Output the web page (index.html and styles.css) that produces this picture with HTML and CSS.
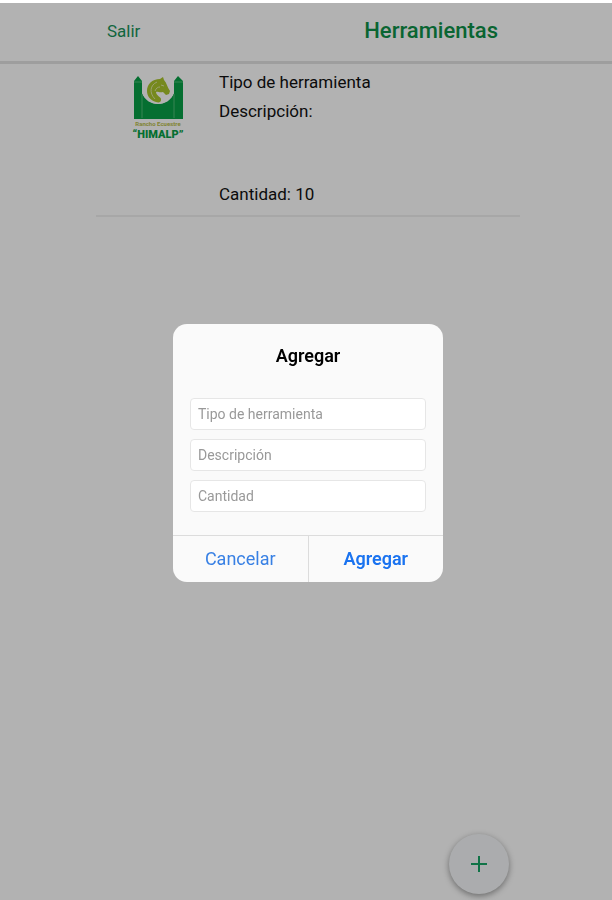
FILE: index.html
```html
<!DOCTYPE html>
<html lang="es">
<head>
    <meta charset="UTF-8">
    <meta name="viewport" content="width=device-width, initial-scale=1.0">
    <title>Herramientas</title>
    <link rel="stylesheet" href="styles.css">
</head>
<body>

    <div class="app">
        <header class="header">
            <div class="header-content">
                <a href="#" class="salir">Salir</a>
                <h1>Herramientas</h1>
            </div>
        </header>

        <main class="lista">
            <article class="herramienta">
                <svg class="logo" viewBox="0 0 52 66" role="img" aria-label="Rancho Ecuestre HIMALP">
                    <!-- torres y muro -->
                    <path class="verde" d="M6 0L10 5V17C13 24 19 28 26 28S39 24 42 17V5L46 0L51 5V43H2V5Z"/>
                    <path class="fondo" d="M10 0H42V17C39 24 33 28 26 28S13 24 10 17Z"/>
                    <path class="linea" d="M2 6H10M42 6H51M10 18V42M42 18V42"/>
                    <!-- caballo -->
                    <path class="lima" d="M28 3L31 1L32 4C35 7 35 11 38 15L37 18L34 19L31 16C27 17 26 15 24 16C24 20 30 21 29 24C29 26 27 27 24 26C18 24 15 20 15 15C15 8 20 3 28 3Z"/>
                    <path class="crin" d="M25 6C18 9 17 17 23 23M29 9L32 10M23 15C24 12 26 11 28 11"/>
                    <text class="rancho" x="26" y="50" text-anchor="middle">Rancho Ecuestre</text>
                    <text class="himalp" x="26" y="62" text-anchor="middle">“HIMALP”</text>
                </svg>
                <div class="datos">
                    <p>Tipo de herramienta</p>
                    <p>Descripción:</p>
                    <p class="cantidad">Cantidad: 10</p>
                </div>
            </article>
        </main>

        <div class="acciones">
            <button type="button" class="boton-agregar" aria-label="Agregar herramienta">
                <svg width="16" height="16" viewBox="0 0 16 16">
                    <path d="M8 0V16M0 8H16"/>
                </svg>
            </button>
        </div>
    </div>

    <div class="fondo-modal">
        <form class="modal" role="dialog" aria-labelledby="tituloModal">
            <h2 id="tituloModal">Agregar</h2>
            <div class="campos">
                <input type="text" id="tipo" placeholder="Tipo de herramienta" aria-label="Tipo de herramienta">
                <input type="text" id="descripcion" placeholder="Descripción" aria-label="Descripción">
                <input type="text" id="cantidad" placeholder="Cantidad" aria-label="Cantidad">
            </div>
            <div class="botones">
                <button type="button">Cancelar</button>
                <button type="button" class="principal">Agregar</button>
            </div>
        </form>
    </div>

</body>
</html>
```
FILE: styles.css
```css
* {
    box-sizing: border-box;
}
body {
    margin: 0;
    padding-top: 3px;
    font-family: Roboto, sans-serif;
    background-color: #fff;
    color: #111;
}
h1, h2, p {
    margin: 0;
}
.app {
    display: flex;
    flex-direction: column;
    min-height: calc(100vh - 3px);
}
.header {
    border-bottom: 3px solid #e2e2e2;
    padding-left: 4px;
}
.header-content {
    display: flex;
    justify-content: space-between;
    align-items: center;
    max-width: 424px;
    height: 58px;
    margin: 0 auto;
    padding: 0 22px 3px 11px;
}
.salir {
    color: #18925a;
    font-size: 17px;
    text-decoration: none;
}
.header h1 {
    color: #0e9148;
    font-size: 22px;
    font-weight: 500;
}
.lista {
    flex: 1;
    padding-left: 4px;
}
.herramienta {
    display: flex;
    gap: 35px;
    max-width: 424px;
    margin: 0 auto;
    padding: 4px 0 6px 36px;
    border-bottom: 2px solid #efefef;
}
.logo {
    width: 52px;
    height: 66px;
    margin-top: 8px;
    overflow: visible;
}
.verde {
    fill: #08a047;
}
.fondo {
    fill: #fff;
}
.linea {
    fill: none;
    stroke: #4fbd79;
}
.lima {
    fill: #a9c42c;
}
.crin {
    fill: none;
    stroke: #dfe7a5;
}
.rancho {
    fill: #b9bd4a;
    font: bold 6px Roboto, sans-serif;
}
.himalp {
    fill: #08a047;
    font: 900 11px Roboto, sans-serif;
}
.datos {
    font-size: 17px;
    line-height: 29px;
}
.cantidad {
    margin-top: 54px;
}
.acciones {
    display: flex;
    justify-content: flex-end;
    width: 100%;
    max-width: 424px;
    margin: 0 auto;
    padding: 0 9px 6px 0;
}
.boton-agregar {
    display: flex;
    align-items: center;
    justify-content: center;
    width: 60px;
    height: 60px;
    padding: 0;
    border: none;
    border-radius: 50%;
    background-color: #f5f7f9;
    box-shadow: 0 2px 6px rgba(0, 0, 0, 0.4);
    cursor: pointer;
}
.boton-agregar path {
    stroke: #18a566;
    stroke-width: 2;
}
.fondo-modal {
    position: fixed;
    inset: 3px 0 0 0;
    display: flex;
    align-items: center;
    justify-content: center;
    padding: 3px 0 0 4px;
    background-color: rgba(0, 0, 0, 0.3);
}
.modal {
    width: 270px;
    border-radius: 14px;
    background-color: #fafafa;
    overflow: hidden;
}
.modal h2 {
    padding: 20px 16px 0;
    color: #000;
    font-size: 18px;
    font-weight: 600;
    line-height: 24px;
    text-align: center;
}
.campos {
    display: flex;
    flex-direction: column;
    gap: 9px;
    padding: 30px 17px 23px;
}
.campos input {
    width: 100%;
    height: 32px;
    padding: 0 7px;
    border: 1px solid #e6e6e6;
    border-radius: 4px;
    background-color: #fff;
    font-family: inherit;
    font-size: 14px;
}
.campos input::placeholder {
    color: #999;
}
.botones {
    display: flex;
    border-top: 1px solid #dcdcdc;
}
.botones button {
    flex: 1;
    height: 46px;
    padding: 0 0 2px;
    border: none;
    background: none;
    color: #3880e4;
    font-family: inherit;
    font-size: 18px;
    cursor: pointer;
}
.botones .principal {
    border-left: 1px solid #dcdcdc;
    color: #1a73f0;
    font-weight: 600;
}
```
